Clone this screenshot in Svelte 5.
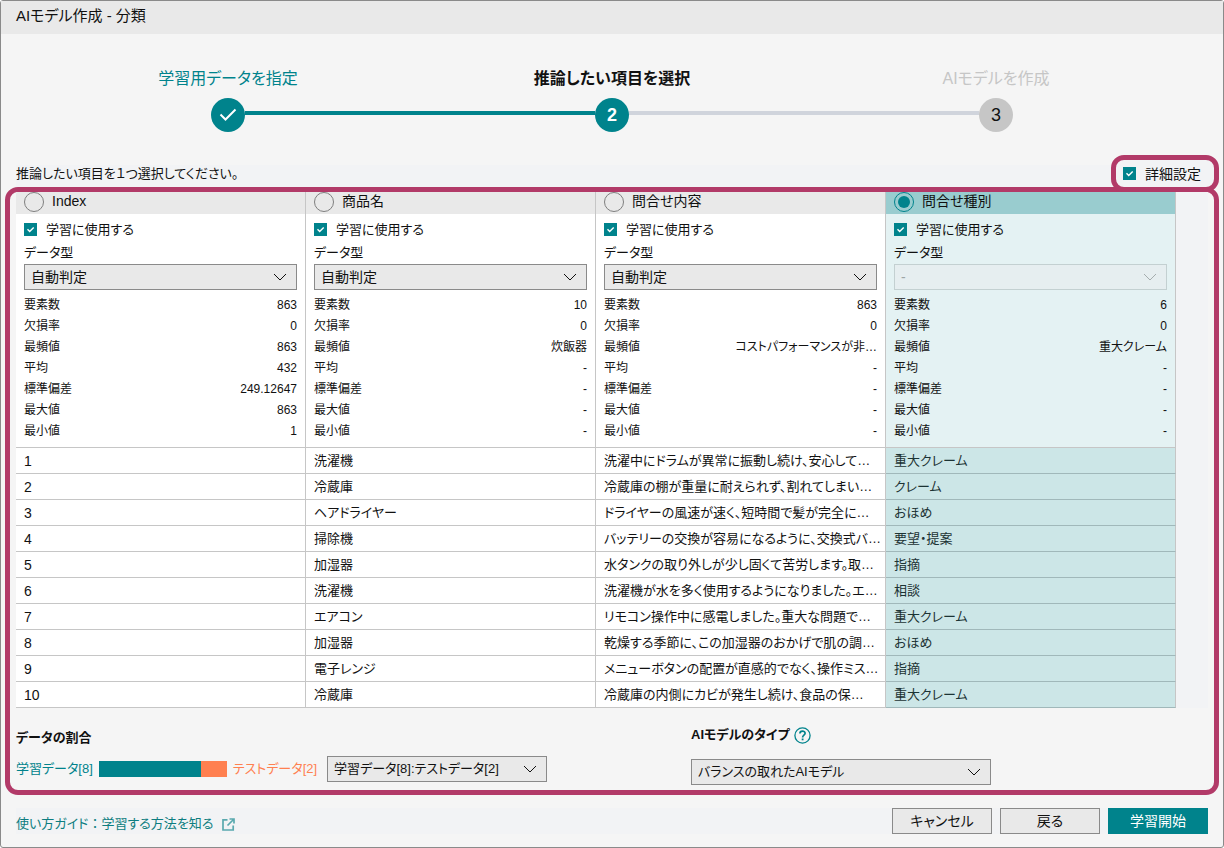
<script lang="ts">
  type Column = {
    name: string;
    use: boolean;
    type: string;
    stats: string[];
    cells: string[];
  };

  const statLabels = ['要素数', '欠損率', '最頻値', '平均', '標準偏差', '最大値', '最小値'];
  const steps = ['学習用データを指定', '推論したい項目を選択', 'AIモデルを作成'];
  const current = 1;

  let columns = $state<Column[]>([
    {
      name: 'Index',
      use: true,
      type: '自動判定',
      stats: ['863', '0', '863', '432', '249.12647', '863', '1'],
      cells: ['1', '2', '3', '4', '5', '6', '7', '8', '9', '10'],
    },
    {
      name: '商品名',
      use: true,
      type: '自動判定',
      stats: ['10', '0', '炊飯器', '-', '-', '-', '-'],
      cells: ['洗濯機', '冷蔵庫', 'ヘアドライヤー', '掃除機', '加湿器', '洗濯機', 'エアコン', '加湿器', '電子レンジ', '冷蔵庫'],
    },
    {
      name: '問合せ内容',
      use: true,
      type: '自動判定',
      stats: ['863', '0', 'コストパフォーマンスが非…', '-', '-', '-', '-'],
      cells: [
        '洗濯中にドラムが異常に振動し続け、安心して…',
        '冷蔵庫の棚が重量に耐えられず、割れてしまい…',
        'ドライヤーの風速が速く、短時間で髪が完全に…',
        'バッテリーの交換が容易になるように、交換式バ…',
        '水タンクの取り外しが少し固くて苦労します。取…',
        '洗濯機が水を多く使用するようになりました。エ…',
        'リモコン操作中に感電しました。重大な問題で…',
        '乾燥する季節に、この加湿器のおかげで肌の調…',
        'メニューボタンの配置が直感的でなく、操作ミス…',
        '冷蔵庫の内側にカビが発生し続け、食品の保…',
      ],
    },
    {
      name: '問合せ種別',
      use: true,
      type: '-',
      stats: ['6', '0', '重大クレーム', '-', '-', '-', '-'],
      cells: ['重大クレーム', 'クレーム', 'おほめ', '要望・提案', '指摘', '相談', '重大クレーム', 'おほめ', '指摘', '重大クレーム'],
    },
  ]);

  let target = $state(3);
  let advanced = $state(true);
  let train = $state(8);
  let model = $state('balanced');
</script>

{#snippet chevron()}
  <svg class="chevron" width="14" height="8" viewBox="0 0 14 8" aria-hidden="true">
    <path d="M1 1l6 6 6-6" fill="none" stroke="currentColor" stroke-width="1" />
  </svg>
{/snippet}

{#snippet checkbox(id: string, get: () => boolean, set: (v: boolean) => void)}
  <span class="check">
    <input {id} type="checkbox" bind:checked={get, set} />
    <svg width="13" height="13" viewBox="0 0 13 13" aria-hidden="true">
      <path d="M3.5 6.3l2.2 2.2 4-4" fill="none" stroke="#fff" stroke-width="1.4" />
    </svg>
  </span>
{/snippet}

<main class="dialog">
  <header class="titlebar"><h1>AIモデル作成 - 分類</h1></header>

  <ol class="steps">
    {#each steps as step, i}
      <li class:done={i < current} class:active={i === current}>
        <span class="step-name">{step}</span>
        <span class="track">
          <span class="line" class:on={i > 0 && i <= current} class:none={i === 0}></span>
          <span class="dot">
            {#if i < current}
              <svg width="18" height="14" viewBox="0 0 18 14" aria-hidden="true">
                <path d="M1.500 6.500l5 5 10-10" fill="none" stroke="#fff" stroke-width="2" />
              </svg>
            {:else}
              {i + 1}
            {/if}
          </span>
          <span class="line" class:on={i < current} class:none={i === steps.length - 1}></span>
        </span>
      </li>
    {/each}
  </ol>

  <div class="hint-row">
    <p>推論したい項目を１つ選択してください。</p>
    <div class="advanced">
      {@render checkbox('advanced', () => advanced, (v) => (advanced = v))}
      <label for="advanced">詳細設定</label>
    </div>
  </div>

  <section class="frame">
    <div class="grid-area">
      <table>
        <thead>
          <tr>
            {#each columns as col, i}
              <th scope="col" class:selected={i === target}>
                <label class="pick">
                  <input type="radio" name="target" value={i} bind:group={target} />
                  {col.name}
                </label>
              </th>
            {/each}
          </tr>
        </thead>
        <tbody>
          <tr class="summary">
            {#each columns as col, i}
              <td class:selected={i === target}>
                <div class="use">
                  {@render checkbox(`use-${i}`, () => col.use, (v) => (col.use = v))}
                  <label for="use-{i}">学習に使用する</label>
                </div>
                <label class="type-label" for="type-{i}">データ型</label>
                <span class="select">
                  <select id="type-{i}" bind:value={col.type} disabled={i === target}>
                    <option>{col.type}</option>
                  </select>
                  {@render chevron()}
                </span>
                <dl>
                  {#each statLabels as label, s}
                    <div><dt>{label}</dt><dd>{col.stats[s]}</dd></div>
                  {/each}
                </dl>
              </td>
            {/each}
          </tr>
          {#each columns[0].cells as _, r}
            <tr>
              {#each columns as col, i}
                <td class="cell" class:prose={i > 0} class:selected={i === target}>{col.cells[r]}</td>
              {/each}
            </tr>
          {/each}
        </tbody>
      </table>
    </div>

    <div class="options">
      <div class="ratio">
        <h2><label for="ratio">データの割合</label></h2>
        <div class="ratio-row">
          <span class="train">学習データ[{train}]</span>
          <span class="bar"><span style="width: {train * 10}%"></span></span>
          <span class="test">テストデータ[{10 - train}]</span>
          <span class="select">
            <select id="ratio" bind:value={train}>
              {#each [9, 8, 7, 6, 5] as n}
                <option value={n}>学習データ[{n}]:テストデータ[{10 - n}]</option>
              {/each}
            </select>
            {@render chevron()}
          </span>
        </div>
      </div>
      <div class="model">
        <h2>
          <label for="model">AIモデルのタイプ</label>
          <svg width="17" height="17" viewBox="0 0 17 17" aria-hidden="true">
            <circle cx="8.500" cy="8.500" r="7.600" fill="none" stroke="#00838c" stroke-width="1.300" />
            <path d="M5.900 6.600c0-3.400 5.200-3.200 5.200-.3 0 1.900-2.500 1.900-2.500 4.100" fill="none" stroke="#00838c" stroke-width="1.700" />
            <rect x="7.700" y="11.500" width="1.800" height="1.800" fill="#00838c" />
          </svg>
        </h2>
        <span class="select">
          <select id="model" bind:value={model}>
            <option value="balanced">バランスの取れたAIモデル</option>
          </select>
          {@render chevron()}
        </span>
      </div>
    </div>
  </section>

  <footer>
    <a href="#guide">
      <span>使い方ガイド<span class="full">：</span>学習する方法を知る</span>
      <svg width="13" height="13" viewBox="0 0 13 13" aria-hidden="true">
        <path d="M5.500 1.800h-4.500v10.200h10.200v-4.500M7.500 1h4.500v4.500M12 1l-6.500 6.500" fill="none" stroke="#5aa9ae" stroke-width="1.700" />
      </svg>
    </a>
    <button type="button">キャンセル</button>
    <button type="button">戻る</button>
    <button type="button" class="primary">学習開始</button>
  </footer>
</main>

<style>
  :global(body) { margin: 0; }
  .dialog {
    --teal: #00838c;
    --pink: #b23a68;
    --line: #c6c6c6;
    --strip: #f2f3f5;
    box-sizing: border-box;
    min-height: 100vh;
    border: 1px solid #8a8a8a;
    border-radius: 3px;
    background: #f5f5f5;
    color: #111;
    font: 13px/20px "Liberation Sans", "Noto Sans CJK JP", sans-serif;
    font-feature-settings: "palt";
  }
  h1, h2, p, ol, dl, dd { margin: 0; padding: 0; }
  select, button { font: inherit; font-feature-settings: inherit; color: inherit; }

  .titlebar { height: 33px; box-sizing: border-box; padding: 5px 15px; background: #e9e9e9; }
  .titlebar h1 { font-size: 15px; font-weight: 400; line-height: 20px; }

  .steps { display: flex; list-style: none; padding: 33px 35px 23px; }
  .steps li { flex: 1; display: flex; flex-direction: column; gap: 7px; color: #c6c6c6; text-align: center; }
  .step-name { font-size: 16px; line-height: 24px; }
  .track { display: flex; align-items: center; }
  .line { flex: 1; height: 4px; margin-bottom: 4px; background: #d0d4dc; }
  .line.on { background: var(--teal); }
  .line.none { visibility: hidden; }
  .dot { display: grid; place-items: center; width: 34px; height: 34px; border-radius: 50%; background: #c6c6c6; color: #111; font-size: 18px; }
  .done .dot, .active .dot { background: var(--teal); color: #fff; }
  .steps .done { color: var(--teal); }
  .steps .active { color: #111; }
  .active .step-name, .active .dot { font-weight: 700; }

  /* the tab's lower edge shares the frame's upper edge */
  .hint-row { position: relative; z-index: 1; display: flex; margin: 0 4px -5px; }
  .hint-row p { flex: 1; margin: 10px 0 5px 11px; background: var(--strip); line-height: 18px; }
  .advanced { display: flex; align-items: center; gap: 9px; height: 27px; padding: 0 13px 0 7px; border: 5px solid var(--pink); border-radius: 13px; background: var(--strip); font-size: 14px; }

  .frame { margin: 0 4px; padding: 0 6px; border: 5px solid var(--pink); border-radius: 13px; }
  .grid-area { padding-right: 32px; background: var(--strip); }
  table { width: 100%; table-layout: fixed; border-collapse: separate; border-spacing: 0; }
  th, td { padding: 0 8px; border-right: 1px solid var(--line); text-align: left; font-weight: 400; }
  th { height: 22px; background: #e9e9e9; font-size: 14px; }
  td { border-bottom: 1px solid var(--line); background: #fff; }
  th.selected { background: #99cccf; }
  .summary td { padding: 5px 8px; }
  .summary td.selected { background: #e4f2f3; }
  .cell { height: 25px; padding-right: 0; font-size: 14px; line-height: 24px; white-space: nowrap; overflow: hidden; text-overflow: ellipsis; }
  .cell.prose { font-size: 13px; }
  .cell.selected { background: #cce6e7; border-bottom-color: #a0b8ba; color: #1c3334; }

  .pick { display: flex; gap: 8px; height: 22px; line-height: 19px; }
  .pick input { appearance: none; box-sizing: border-box; width: 20px; height: 20px; margin: 0; border: 1px solid #7f7f7f; border-radius: 50%; background: transparent; }
  .pick input:checked { padding: 3px; border-color: var(--teal); background: var(--teal) content-box; }

  .check { display: grid; width: 13px; height: 13px; }
  .check > * { grid-area: 1 / 1; }
  .check input { appearance: none; width: 13px; height: 13px; margin: 0; box-sizing: border-box; border: 1px solid #8a8a8a; background: #fff; }
  .check input:checked { border: 0; background: var(--teal); }
  .check svg { pointer-events: none; }
  .check input:not(:checked) + svg { visibility: hidden; }

  .use { display: flex; align-items: center; gap: 9px; height: 21px; }
  .type-label { display: block; height: 24px; line-height: 26px; }

  .select { display: grid; align-items: center; }
  .select > :global(*) { grid-area: 1 / 1; }
  .select select { appearance: none; box-sizing: border-box; width: 100%; height: 26px; margin: 0; padding: 0 32px 0 6px; border: 1px solid #8a8a8a; border-radius: 0; background: #e9e9e9; }
  .summary select { font-size: 14px; }
  .select select:disabled { border-color: #c3d0d1; background: #e6eef0; color: #9da5a6; opacity: 1; }
  .chevron { justify-self: end; margin-right: 10px; pointer-events: none; }
  select:disabled + .chevron { color: #a5adae; }

  dl { margin-top: 5px; font-size: 12px; }
  dl div { display: flex; justify-content: space-between; height: 21px; line-height: 21px; }

  .options { display: grid; grid-template-columns: 675fr 517fr; height: 82px; }
  h2 { display: flex; gap: 4px; font-size: 13px; font-weight: 700; height: 20px; }
  .ratio { padding-top: 20px; }
  .ratio-row { display: flex; align-items: center; gap: 6px; margin-top: 8px; }
  .train { color: var(--teal); }
  .test { color: #ff8050; }
  .bar { width: 128px; height: 16px; background: #ff8050; }
  .bar span { display: block; height: 100%; background: var(--teal); }
  .ratio .select { width: 220px; margin-left: 4px; }
  .model { padding-top: 17px; }
  .model h2 { align-items: center; margin-bottom: 14px; }
  .model .select { width: 300px; }

  footer { display: flex; gap: 8px; margin: 13px 15px; background: var(--strip); }
  footer a { display: flex; align-items: center; gap: 8px; margin-right: auto; padding-top: 6px; color: #0d7d80; text-decoration: none; }
  .full { font-feature-settings: normal; }
  button { width: 100px; height: 26px; padding: 0; border: 1px solid #8a8a8a; background: #e9e9e9; font-size: 14px; }
  .primary { border-color: var(--teal); background: var(--teal); color: #fff; }
</style>
